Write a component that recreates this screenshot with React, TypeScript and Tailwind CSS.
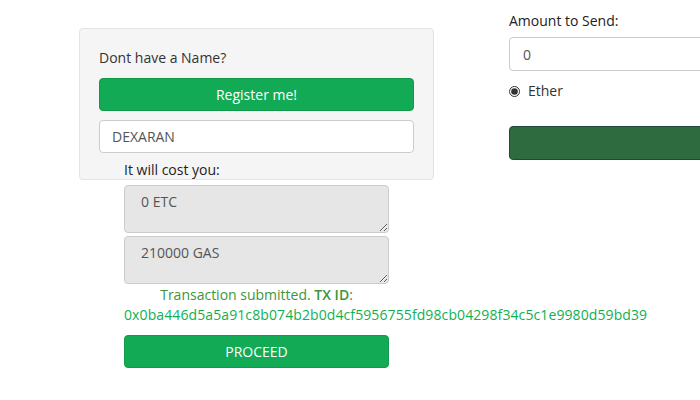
import { useState } from 'react'

const font = { fontFamily: '"Open Sans", "Liberation Sans", sans-serif' }

export default function App() {
  const [name, setName] = useState('DEXARAN')
  const [amount, setAmount] = useState('0')

  return (
    <div
      className="relative h-[400px] w-[700px] overflow-hidden bg-white text-[14px] text-[#333]"
      style={font}
    >
      <div className="flex items-start">
        <div className="ml-[79px] mt-[28px] w-[355px] shrink-0">
          <div className="h-[152px] rounded-[4px] border border-[#e3e3e3] bg-[#f5f5f5] px-[19px] pt-[19px]">
            <p className="leading-[20px]">Dont have a Name?</p>
            <button className="mt-[10px] h-[33px] w-full rounded-[4px] border border-[#109a4a] bg-[#12aa55] text-white">
              Register me!
            </button>
            <input
              value={name}
              onChange={(e) => setName(e.target.value)}
              className="mt-[9px] h-[33px] w-full rounded-[4px] border border-[#ccc] bg-white px-[12px] text-[#555] outline-none"
            />
            <p className="mt-[7px] ml-[25px] font-medium leading-[20px] text-[#222]">
              It will cost you:
            </p>
          </div>
          <div className="ml-[45px] mt-[5px] w-[265px]">
            <textarea
              readOnly
              value="0 ETC"
              className="block h-[48px] w-full rounded-[4px] border border-[#ccc] bg-[#e6e6e6] px-[16px] py-[5px] text-[#555] outline-none"
            />
            <textarea
              readOnly
              value="210000 GAS"
              className="mt-[3px] block h-[48px] w-full rounded-[4px] border border-[#ccc] bg-[#e6e6e6] px-[16px] py-[5px] text-[#555] outline-none"
            />
            <p className="mt-[1px] text-center leading-[20px] text-[#3c963c]">
              Transaction submitted. <span className="font-semibold">TX ID</span>:
            </p>
          </div>
          <p className="ml-[45px] whitespace-nowrap leading-[20px] tracking-[0.1px] text-[#10b050]">
            0x0ba446d5a5a91c8b074b2b0d4cf5956755fd98cb04298f34c5c1e9980d59bd39
          </p>
          <button className="ml-[45px] mt-[10px] h-[33px] w-[265px] rounded-[4px] border border-[#109a4a] bg-[#12aa55] text-white">
            PROCEED
          </button>
        </div>
        <div className="ml-[75px] mt-[11px] w-[260px] shrink-0">
          <p className="leading-[20px] text-[#222]">Amount to Send:</p>
          <input
            value={amount}
            onChange={(e) => setAmount(e.target.value)}
            className="mt-[6px] h-[34px] w-full rounded-[4px] border border-[#ccc] bg-white px-[13px] text-[#555] outline-none"
          />
          <label className="mt-[10px] flex items-center gap-[8px] leading-[20px] text-[#333]">
            <input type="radio" defaultChecked className="m-0 h-[11px] w-[11px] accent-[#333]" />
            Ether
          </label>
          <button className="mt-[25px] block h-[34px] w-full rounded-[4px] border border-[#1f4a35] bg-[#2e6b3e]" />
        </div>
      </div>
    </div>
  )
}
